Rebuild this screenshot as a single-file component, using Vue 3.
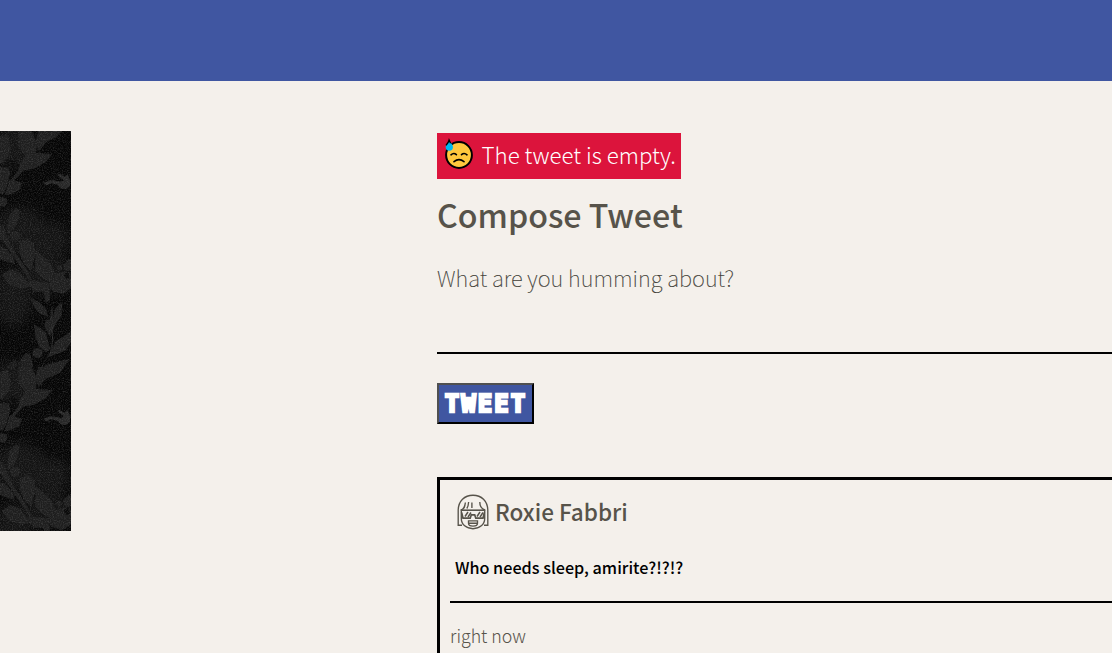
<script setup>
const tiles = [0, 708]
</script>

<template>
  <div class="page">
    <header class="topbar"></header>
    <div class="columns">
      <aside class="side">
        <svg class="floral" viewBox="0 33 213 1200" preserveAspectRatio="none">
          <defs>
            <filter id="grain" x="0" y="0" width="100%" height="100%" color-interpolation-filters="sRGB">
              <feTurbulence type="fractalNoise" baseFrequency=".3" numOctaves="2" seed="8" />
              <feColorMatrix values="0 0 0 0 .5  0 0 0 0 .5  0 0 0 0 .5  1.8 0 0 0 -.74" />
            </filter>
            <filter id="soft" color-interpolation-filters="sRGB"><feGaussianBlur stdDeviation="2" /></filter>
            <filter id="haze" x="-50%" y="-50%" width="200%" height="200%" color-interpolation-filters="sRGB"><feGaussianBlur stdDeviation="16" /></filter>
          </defs>
          <rect y="33" width="213" height="1200" fill="#050505" />
          <g v-for="t in tiles" :key="t" :transform="`translate(0 ${t})`">
            <g fill="#161616" filter="url(#haze)" opacity=".85">
              <ellipse cx="40" cy="80" rx="65" ry="65" />
              <ellipse cx="60" cy="335" rx="75" ry="75" />
              <ellipse cx="145" cy="360" rx="65" ry="55" />
              <ellipse cx="40" cy="530" rx="55" ry="90" />
              <ellipse cx="150" cy="465" rx="75" ry="50" />
            </g>
            <g fill="#1e1e1e" filter="url(#soft)">
              <path d="M0 50 22 40 32 75 28 105 8 130 0 130Z" />
              <path d="M55 33 95 33 112 70 106 105 78 112 55 80Z" />
              <path d="M115 33 187 33 166 54 140 65 116 94 106 65Z" />
              <path d="M60 129 75 108 110 98 157 103 138 126 102 146 72 151 32 192 28 186 55 151Z" />
              <path d="M0 142 25 142 31 160 21 200 8 225 0 220Z" />
              <path d="M30 178 66 188 58 210 28 224 14 225 21 203Z" />
              <path fill="#272727" d="M130 189 151 181 170 183 184 187 191 181 172 165 178 161 194 170 203 163 210 181 210 198 198 207 184 206 173 194 152 190 140 196Z" />
              <path d="M22 320 29 284 47 264 59 272 55 300 43 326 24 341Z" />
              <circle cx="45" cy="347" r="15" />
              <path d="M0 231 20 235 22 248 14 261 0 258Z" />
              <path d="M0 315 12 325 25 358 41 390 82 450 96 480 86 477 45 417 16 372 0 352Z" />
              <path d="M60 365 84 357 101 370 108 402 99 430 94 453 71 431 58 400Z" />
              <path d="M0 378 21 388 40 412 45 433 22 425 0 417Z" />
              <path d="M108 390 131 411 153 431 168 465 151 488 123 471 104 450Z" />
              <path d="M5 464 33 447 62 460 80 484 96 500 66 506 29 495Z" />
              <path d="M144 498 164 462 199 453 213 462 213 505 190 521 158 514Z" />
              <path d="M188 436 207 416 213 420 213 450 198 454Z" />
              <circle cx="178" cy="443" r="8" />
              <path d="M84 480 148 488 150 540 138 550 130 515 100 515Z" />
              <path d="M92 532 120 548 137 564 145 590 119 581 103 563Z" />
              <path d="M160 597 164 569 180 548 187 553 184 586 164 618 158 637 149 647 133 620 137 600 149 599 155 560 159 565Z" />
              <path d="M102 612 137 636 151 688 137 696 118 680 106 652Z" />
              <circle cx="113" cy="699" r="15" />
              <path d="M150 697 167 664 190 650 213 634 213 667 196 692 160 706 137 714 119 765 112 759Z" />
              <path d="M53 732 76 700 92 704 99 737 78 792 60 772Z" />
              <path d="M117 758 136 735 179 724 209 716 181 758 147 773 109 780Z" />
              <path d="M18 742 48 717 51 737 36 752 27 748Z" />
              <path d="M155 615 158 660 151 700" fill="none" stroke="#282828" stroke-width="3" />
            </g>
            <g fill="#0a0a0a" filter="url(#soft)">
              <path d="M113 526 124 518 132 532 122 547Z" />
              <path d="M190 464 204 454 210 472 200 478Z" />
              <path d="M12 134 37 119 56 133 47 144Z" />
            </g>
          </g>
          <rect y="33" width="213" height="1200" filter="url(#grain)" opacity=".38" />
        </svg>
      </aside>
      <main class="main">
        <div class="error">
          <svg class="sweat" viewBox="0 0 32 34">
            <circle cx="17" cy="18" r="12.9" fill="#ffc83d" stroke="#000" stroke-width="2" />
            <path d="M7.2 3C6.5 5.2 3.6 7.5 3.6 10a3.7 3.7 0 0 0 7.4 0C11 7.5 7.9 5.2 7.2 3Z" fill="#00b8f0" />
            <path d="M4 8.4Q6.5 5.5 7.1 3.1L8.6 6.2" fill="none" stroke="#000" stroke-width="1.4" />
            <path d="M9 17.8q2.8-2.5 5.4-.1M19.5 17.7q2.7-2.5 5.5.1M12 24.7q5-4.2 10 0" fill="none" stroke="#000" stroke-width="1.6" stroke-linecap="round" />
          </svg>
          <span class="error-text">The tweet is empty.</span>
        </div>
        <h2 class="title"><span>Compose Tweet</span></h2>
        <div class="prompt"><span>What are you humming about?</span></div>
        <button class="send"><span>TWEET</span></button>
        <article class="tweet">
          <div class="author">
            <svg class="avatar" viewBox="0 0 32 36" fill="none" stroke="#57534a" stroke-width="1.35">
              <path d="M5 31.2H1.2V16.5C1.2 6.8 7.7 1.2 16 1.2S30.8 6.8 30.8 16.5v14.7H27" />
              <path d="M4.3 15.5v9c0 6 5.1 10.2 11.7 10.2s11.7-4.2 11.7-10.2v-9" />
              <path d="M3.8 15.9C7.5 15.5 7.9 12 8.4 8.5M9.8 14.5C11.4 12.5 11.4 11 11.6 8M14.9 8.5v5.5M22.8 8q0 6 5 8" />
              <path d="M3.8 16.2h24.4" stroke-width="1.6" />
              <path d="M4.6 18.4 6 24.2h7.2l1.1-3.4h3.4l1.1 3.4H26l1.4-5.8" stroke-width="1.7" />
              <path d="m8 22.5 3-4.5M11 23l3-4.5M20 22.5l3-4.5M23 23l3-4.5" stroke-width="1.5" />
              <path d="M11.5 26.8h9v2.4c0 1.9-1.8 2.9-4.5 2.9s-4.5-1-4.5-2.9ZM11.5 29.2h9" />
            </svg>
            <span class="name">Roxie Fabbri</span>
          </div>
          <p class="body"><span>Who needs sleep, amirite?!?!?</span></p>
          <footer class="time"><span>right now</span></footer>
        </article>
      </main>
    </div>
  </div>
</template>

<style>
body { margin: 0; background: #f4f0eb; overflow: hidden; }
</style>

<style scoped>
.page { width: 1112px; height: 653px; overflow: hidden; background: #f4f0eb; color: #57534a; font-family: "Noto Sans CJK JP", "Noto Sans CJK SC", sans-serif; }
.page span { white-space: nowrap; }
.topbar { height: 81px; background: #4056a1; }
.columns { display: flex; align-items: flex-start; }
.side { width: 71px; height: 400px; margin-top: 50px; flex: none; }
.floral { display: block; width: 71px; height: 400px; }
.main { flex: none; width: 900px; margin: 52px 0 0 366px; }
.error { display: flex; align-items: center; width: 244px; height: 46px; background: #dc143c; color: #fff; box-sizing: border-box; }
.sweat { width: 32px; height: 34px; margin: -4px 8px 0 5px; flex: none; }
.error-text { font-size: 22.3px; font-weight: 300; line-height: 43px; margin: 0 0 3px -.5px; }
.title { margin: 7px 0 0; height: 56px; line-height: 56px; font-size: 32.2px; font-weight: 500; }
.prompt { margin-top: 12px; height: 98px; line-height: 46px; border-bottom: 2px solid #000; font-size: 22px; font-weight: 100; color: #403d36; -webkit-text-stroke: .15px #403d36; }
.send { display: flex; align-items: center; justify-content: center; margin: 29px 0 0; padding: 0 0 0 1px; width: 97px; height: 41px; border: 2px solid; border-color: #505050 #000 #000 #505050; background: #4056a1; color: #fff; font: 700 24px/30px "DejaVu Sans Mono", monospace; letter-spacing: 2.1px; -webkit-text-stroke: 2.4px #fff; }
.tweet { margin-top: 53px; height: 300px; border: 3px solid #000; padding: 13px 10px; }
.author { display: flex; align-items: center; height: 38px; padding-left: 7px; }
.avatar { width: 32px; height: 36px; flex: none; margin: -1px 6px 0 0; }
.name { font-size: 22.5px; font-weight: 500; line-height: 34px; margin-bottom: 3px; }
.body { margin: 19px 0 0; padding-left: 5px; height: 51px; line-height: 34px; font-size: 16.2px; font-weight: 500; color: #000; border-bottom: 2px solid #000; }
.time { margin-top: 12px; line-height: 40px; font-size: 17.8px; font-weight: 300; }
</style>
